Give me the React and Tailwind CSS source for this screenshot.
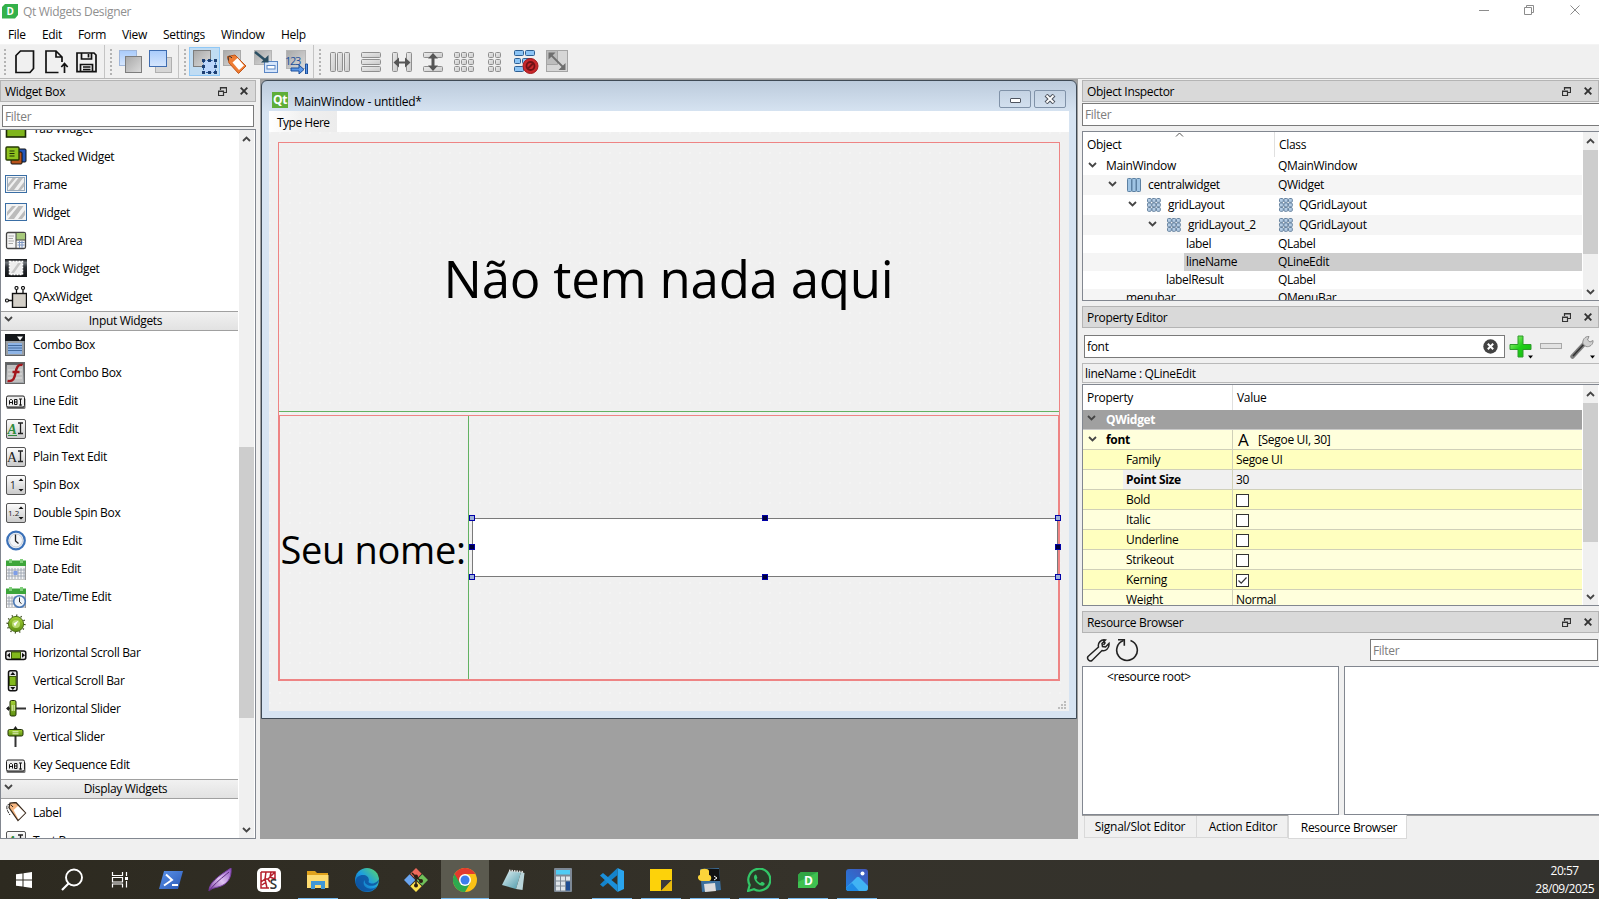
import React from "react";

/* ---------- shared bits ---------- */

const Chevron = ({ up, className = "" }) => (
  <svg width="9" height="6" viewBox="0 0 9 6" className={`shrink-0 ${className}`}>
    <path d={up ? "M1 5 4.5 1.5 8 5" : "M1 1 4.5 4.5 8 1"} fill="none" stroke="#454545" strokeWidth="1.8" />
  </svg>
);

const DockTitle = ({ children, className = "" }) => (
  <div className={`flex h-[22px] shrink-0 items-center border border-[#b4b4b4] bg-[#d9d9d9] pl-1 ${className}`}>
    <span className="grow pt-[2px]">{children}</span>
    <svg width="9" height="9" viewBox="0 0 9 9" className="mr-[13px]">
      <path d="M2.5 3V.5h6v5H6M2.5 1h6M.5 4h5v4.500h-5zM.5 4.400h5" fill="none" stroke="#333" strokeWidth="1.2" />
    </svg>
    <svg width="8" height="8" viewBox="0 0 8 8" className="mr-[6px]">
      <path d="M.7.7l6.600 6.600M7.300.7.7 7.300" stroke="#333" strokeWidth="1.900" />
    </svg>
  </div>
);

const VScroll = ({ before, thumb, className = "" }) => (
  <div className={`flex w-[15px] shrink-0 flex-col items-center bg-[#f0f0f0] ${className}`}>
    <div className="flex h-[17px] shrink-0 items-center"><Chevron up /></div>
    <div className={`w-full shrink-0 ${before}`} />
    <div className={`w-full shrink-0 bg-[#cdcdcd] ${thumb}`} />
    <div className="grow" />
    <div className="flex h-[17px] shrink-0 items-center"><Chevron /></div>
  </div>
);

/* ---------- tool bar icons ---------- */

const Ico = ({ children, w = 24, h = 24, vb, className = "" }) => (
  <svg width={w} height={h} viewBox={vb || `0 0 ${w} ${h}`} className={`shrink-0 ${className}`}>{children}</svg>
);

const Grads = () => (
  <svg width="0" height="0" className="absolute">
    <defs>
      <linearGradient id="gr" x1="0" y1="0" x2="1" y2="1"><stop offset="0" stopColor="#a8a8a8" /><stop offset="1" stopColor="#dcdcdc" /></linearGradient>
      <linearGradient id="bl" x1="0" y1="0" x2="0" y2="1"><stop offset="0" stopColor="#a9cbfb" /><stop offset="1" stopColor="#d6e6fd" /></linearGradient>
      <linearGradient id="barg" x1="0" y1="0" x2="1" y2="1"><stop offset="0" stopColor="#ececec" /><stop offset="1" stopColor="#c9c9c9" /></linearGradient>
      <linearGradient id="box" x1="0" y1="0" x2="0" y2="1"><stop offset="0" stopColor="#fdfdfd" /><stop offset="1" stopColor="#c9c9c9" /></linearGradient>
      <linearGradient id="grn" x1="0" y1="0" x2="0" y2="1"><stop offset="0" stopColor="#a5d236" /><stop offset="1" stopColor="#5d8f12" /></linearGradient>
      <linearGradient id="dk" x1="0" y1="0" x2="0" y2="1"><stop offset="0" stopColor="#5a5d60" /><stop offset="1" stopColor="#a5aaae" /></linearGradient>
      <linearGradient id="dk2" x1="0" y1="0" x2="0" y2="1"><stop offset="0" stopColor="#101214" /><stop offset=".2" stopColor="#6f7479" /><stop offset=".45" stopColor="#2b2f34" /><stop offset="1" stopColor="#101214" /></linearGradient>
      <linearGradient id="plus" x1="0" y1="0" x2="1" y2="1"><stop offset="0" stopColor="#b9f58e" /><stop offset=".5" stopColor="#1fd018" /><stop offset="1" stopColor="#18b412" /></linearGradient>
      <linearGradient id="edge" x1="0" y1="1" x2="1" y2="0"><stop offset="0" stopColor="#0c59a4" /><stop offset=".5" stopColor="#1b9de2" /><stop offset="1" stopColor="#5fdc63" /></linearGradient>
      <linearGradient id="photo" x1="0" y1="1" x2="1" y2="0"><stop offset="0" stopColor="#1f7fe0" /><stop offset="1" stopColor="#4455b8" /></linearGradient>
      <linearGradient id="fth" x1="0" y1="1" x2="1" y2="0"><stop offset="0" stopColor="#7c3fa0" /><stop offset=".5" stopColor="#e0c4f2" /><stop offset="1" stopColor="#8d4fc0" /></linearGradient>
      <linearGradient id="ps" x1="0" y1="0" x2="1" y2="1"><stop offset="0" stopColor="#5b93ea" /><stop offset="1" stopColor="#2a58b5" /></linearGradient>
      <linearGradient id="note" x1="0" y1="0" x2="1" y2="1"><stop offset="0" stopColor="#e4f3f5" /><stop offset="1" stopColor="#4a97a8" /></linearGradient>
    </defs>
  </svg>
);

const Grip = ({ className = "" }) => (
  <div className={`flex h-[26px] w-[2px] shrink-0 flex-col justify-between ${className}`}>
    {[0, 1, 2, 3, 4, 5, 6].map((i) => <div key={i} className="size-[2px] bg-[#b3b3b3]" />)}
  </div>
);
const Sep = ({ className = "" }) => <div className={`h-[33px] w-px shrink-0 bg-[#c4c4c4] ${className}`} />;

const Bar = ({ x, y, w, h }) => <rect x={x + 0.5} y={y + 0.5} width={w - 1} height={h - 1} rx="1" fill="url(#barg)" stroke="#8f8f8f" />;

const ToolBar = () => (
  <div className="flex h-[34px] shrink-0 items-center border-b border-[#b9b9b9] bg-[#f0f0f0]">
    <Grip className="ml-1" />
    <Ico className="ml-[9px]" h={26}><path d="M5.500 2h13v17.500l-3.500 4H1V6.500z" fill="none" stroke="#111" strokeWidth="1.700" /></Ico>
    <Ico className="ml-[6px]" h={26}><path d="M13.500 23.500H1V2h10l6 6v5M11 2v6h6M19.500 24v-9M16.300 18l3.200-3.400 3.200 3.400" fill="none" stroke="#111" strokeWidth="1.700" /></Ico>
    <Ico className="ml-[7px]" w={22} h={26}><path d="M1 4h17l2 2v16.700H1zM5.500 4v6h10V4M12.500 5v3.500M4.500 22.500v-7h12v7M7 18h7.500M7 20.500h7.500" fill="none" stroke="#111" strokeWidth="1.700" /></Ico>
    <Sep className="ml-[6px]" /><Grip className="ml-[5px]" />
    <Ico className="ml-[6px]"><rect x="1.500" y=".5" width="17" height="15" fill="url(#bl)" stroke="#9fb6da" /><rect x="7.500" y="6.500" width="16" height="16" fill="url(#gr)" stroke="#7d7d7d" /></Ico>
    <Ico className="ml-[6px]"><rect x="7.500" y="7.500" width="16" height="15" fill="#d6d6d6" stroke="#b0b0b0" /><rect x="1.500" y=".5" width="17" height="16" fill="url(#bl)" stroke="#3e6cb0" /></Ico>
    <Sep className="ml-[6px]" /><Grip className="ml-[5px]" />
    <div className="ml-[3px] flex h-[29px] w-[31px] items-center justify-center border border-[#90c8f6] bg-[#c0dcf3]">
      <Ico>
        <rect x=".5" y=".5" width="17" height="16" fill="url(#gr)" stroke="#7d7d7d" />
        <rect x="10.500" y="10.500" width="12" height="12" fill="#bcd6fb" stroke="#2a5fa5" strokeDasharray="2 1.500" />
        {[[9, 9], [15, 9], [21, 9], [9, 15], [21, 15], [9, 21], [15, 21], [21, 21]].map(([x, y]) => <rect key={`${x}-${y}`} x={x} y={y} width="3" height="3" fill="#1d3f73" />)}
      </Ico>
    </div>
    <Ico className="ml-[3px]"><rect x=".5" y=".5" width="17" height="15" fill="url(#gr)" stroke="#aaa" /><path d="M4.500 6.500 12 5l11 11-7.500 7.500L6 13z" fill="#ef7d34" stroke="#c0561a" /><path d="M9.500 12.500l5-4.500 6.500 7.500-5 4.500z" fill="#fff" /><path d="M5.500 10.500C4.500 6 6 5 9 8" fill="none" stroke="#333" /></Ico>
    <Ico className="ml-[7px]"><rect x=".5" y=".5" width="17" height="14" fill="url(#gr)" stroke="#b5b5b5" /><rect x="10.500" y="11.500" width="13" height="11" fill="#d5e5fb" stroke="#5b86c4" /><rect x="13" y="15.500" width="8" height="3.500" fill="#fff" stroke="#5b86c4" /><path d="M1 2l10 8" stroke="#2b4f63" strokeWidth="2.400" /><path d="M14.500 12.500V5l-7.500 7.500z" fill="#2b4f63" /></Ico>
    <Ico className="ml-[7px]"><rect x="1.500" y=".5" width="19" height="18" fill="url(#gr)" stroke="#b5b5b5" /><text x="0" y="15" fontSize="11" fontFamily="Open Sans, sans-serif" fill="#1d4f9a" textLength="16">123</text><path d="M6 18h8v-3l5 4.500-5 4.500v-3H6z" fill="#5b97e8" stroke="#1d4f9a" /><path d="M20.500 14v10h2V14z" fill="#5b97e8" stroke="#1d4f9a" /></Ico>
    <Sep className="ml-[4px]" /><Grip className="ml-[5px]" />
    <Ico className="ml-[8px]"><Bar x={1} y={2} w={6} h={20} /><Bar x={8} y={2} w={6} h={20} /><Bar x={15} y={2} w={6} h={20} /></Ico>
    <Ico className="ml-[7px]"><Bar x={1} y={2} w={20} h={6} /><Bar x={1} y={9} w={20} h={6} /><Bar x={1} y={16} w={20} h={6} /></Ico>
    <Ico className="ml-[7px]"><Bar x={1} y={2} w={6} h={20} /><Bar x={15} y={2} w={6} h={20} /><path d="M2.500 12.500l5.500-5v4h6v-4l5.500 5-5.500 5v-4H8v4z" fill="#555" /></Ico>
    <Ico className="ml-[7px]"><Bar x={1} y={2} w={20} h={6} /><Bar x={1} y={16} w={20} h={6} /><path d="M11 3l5 5.500h-3.500v7H16L11 21l-5-5.500h3.500v-7H6z" fill="#555" /></Ico>
    <Ico className="ml-[7px]">{[1, 8, 15].map((x) => [2, 9, 16].map((y) => <Bar key={`${x}${y}`} x={x} y={y} w={6} h={6} />))}</Ico>
    <Ico className="ml-[7px]">{[4, 11].map((x) => [2, 9, 16].map((y) => <Bar key={`${x}${y}`} x={x} y={y} w={6} h={6} />))}</Ico>
    <Ico className="ml-[6px]" w={26}>
      {[[0, 0, 9], [11, 0, 9], [0, 8, 6], [8, 8, 9], [0, 16, 9]].map(([x, y, w]) => <rect key={`${x}-${y}`} x={x + 0.5} y={y + 0.5} width={w} height="5" rx="1" fill="#8cc4f5" stroke="#2e5f92" />)}
      <circle cx="16.500" cy="16" r="7.500" fill="#c9282c" stroke="#a1191d" /><circle cx="16.500" cy="16" r="4" fill="none" stroke="#701216" strokeWidth="1.800" /><path d="M14 18.500l5-5" stroke="#701216" strokeWidth="2" />
    </Ico>
    <Ico className="ml-[5px]"><rect x="1.500" y=".5" width="21" height="21" fill="#d6d6d6" stroke="#a5a5a5" /><path d="M1.500.5h11v14h-11z" fill="#bdbdbd" stroke="#a5a5a5" /><path d="M5 4l14 14" stroke="#6f6f6f" strokeWidth="1.800" /><path d="M3.500 2.500h7l-7 7zM20.500 20h-7l7-7z" fill="#6f6f6f" /></Ico>
  </div>
);

/* ---------- widget box ---------- */

const ABI = (
  <><rect x="1.500" y="8" width="19" height="11" rx="1.500" fill="#777" /><rect x="1.500" y="6" width="18" height="11" rx="1.500" fill="#eee" stroke="#222" /><path d="M4.500 14.500v-4l1-1h1l1 1v4M4.500 12.500h3M9.500 9.500v5h2.500v-5zM9.500 12H12M14 9h3M15.500 9V15.500M14 15h3" fill="none" stroke="#111" /></>
);
const Sq = <rect x="1.500" y="1.500" width="19" height="19" rx="1.500" fill="url(#box)" stroke="#555" />;
const Cal = (
  <><rect x="1.500" y="6" width="19" height="16" fill="#f4f4f4" stroke="#9a9a9a" /><path d="M1 2.500h20V8H1z" fill="#3da53a" /><path d="M4 10v11M7 10v11M10 10v11M13 10v11M16 10v11M19 10v11M2 12h18M2 15h18M2 18h18" stroke="#9aa3b0" strokeWidth=".9" /><path d="M5.500 1v4M16.500 1v4" stroke="#7fcf7a" strokeWidth="3" /></>
);
const icons = {
  tab: <><rect x="1.500" y="5" width="19" height="14" fill="#7fb51c" stroke="#1c2a05" strokeWidth="1.600" /></>,
  stacked: <><rect x="11" y="3" width="10" height="13" rx="1" fill="#2556b8" stroke="#111" /><rect x="6" y="6" width="11" height="12" rx="1" fill="#b8521b" stroke="#111" /><rect x="1" y="1" width="13" height="13" rx="1" fill="#8fc31f" stroke="#263a05" strokeWidth="1.400" /><path d="M4.500 5h5M4.500 7.500h5M4.500 10h5" stroke="#1f2e05" /></>,
  frame: <><rect x=".5" y="1.500" width="21" height="17" fill="#f5f5f5" stroke="#3a6ea5" /><rect x="2.500" y="3.500" width="17" height="13" fill="#f1f1f1" stroke="#9ab" /><path d="M4 16 13.500 4h4.500L9 16zM13 16l6-8v4.500l-3 3.500zM3 10l4.500-6h3.500L3 13.500z" fill="#bcbcbc" /></>,
  widget: <><rect x=".5" y="1.500" width="21" height="17" fill="#f3f3f3" stroke="#3a6ea5" /><path d="M3 17 13.500 4h5L9 17zM13 17l7-9v5l-3 4zM2 10l5-6h4L2 14z" fill="#bcbcbc" /></>,
  mdi: <><rect x="1.500" y="2.500" width="19" height="16" rx="1.500" fill="#f5f5f5" stroke="#444" strokeWidth="1.300" /><path d="M11 3h9v7h-9z" fill="#a7c97b" /><path d="M11 3v15M11 10h9" stroke="#444" /><path d="M3.500 6H9M3.500 8.500H8M3.500 11H9M3.500 13.500H8" stroke="#aaa" /><path d="M12.500 12.500h7M12.500 15h7M14.500 11v7M17 11v7" stroke="#7c95c0" /></>,
  dock: <><rect x="0" y="1" width="22" height="18" fill="url(#dk2)" /><rect x="4.500" y="3.500" width="13" height="13" fill="#eee" stroke="#fff" strokeWidth="1.500" strokeDasharray="2 1" /><path d="M6 15l7-10h3L9 15z" fill="#c6c6c6" /></>,
  qax: <><rect x="7.500" y="7.500" width="14" height="14" fill="#d4d0c8" stroke="#111" strokeWidth="1.400" /><path d="M11.500 7V3.500M18 7V3.500M7 14.500H4" stroke="#111" strokeWidth="1.300" /><g fill="#fff" stroke="#111" strokeWidth="1.200"><circle cx="11.500" cy="2" r="1.500" /><circle cx="18" cy="2" r="1.500" /><circle cx="2" cy="14.500" r="1.500" /></g></>,
  combo: <><rect x=".5" y=".5" width="19" height="21" fill="#9a9fa4" stroke="#5e6368" /><path d="M0 0h20v7H0z" fill="#15181b" /><path d="M12 2.500h6l-3 4z" fill="#fff" /><rect x="3" y="9" width="14" height="11" fill="#8eb4e6" /><path d="M3 11.500h14M3 14h14M3 16.500h14" stroke="#426a9e" /></>,
  fontcombo: <><rect x=".5" y=".5" width="19" height="21" fill="url(#dk)" stroke="#666" /><rect x="2" y="3" width="16" height="17" fill="#bfbfbf" /><path d="M3 8h14M3 12h14M3 16h14" stroke="#dedede" /><path d="M17.500 3c-5-1-6 3-7 8s-2 9-8 8M7.500 10h7" fill="none" stroke="#a3161c" strokeWidth="2.400" /></>,
  line: ABI,
  key: ABI,
  text: <>{Sq}<text x="2.500" y="16" fontFamily="Liberation Serif, serif" fontStyle="italic" fontWeight="bold" fontSize="14" fill="#2d8a3c">A</text><path d="M3 17.500h9" stroke="#2d8a3c" /><path d="M13 5h5M13 15.500h5M15.500 5v10.500" stroke="#222" strokeWidth="1.300" /></>,
  plain: <>{Sq}<text x="2" y="16" fontFamily="Liberation Serif, serif" fontSize="14" fill="#222">A</text><path d="M13 5h5M13 15.500h5M15.500 5v10.500" stroke="#222" strokeWidth="1.300" /></>,
  spin: <>{Sq}<text x="5" y="14.500" fontFamily="Open Sans, sans-serif" fontSize="10" fill="#222">1</text><path d="M13.500 7l2.500-2.500L18.500 7zM13.500 15l2.500 2.500 2.500-2.500z" fill="#111" /></>,
  dspin: <>{Sq}<text x="3" y="14" fontFamily="Open Sans, sans-serif" fontSize="8" fill="#222" textLength="11">1.2</text><path d="M13.500 7l2.500-2.500L18.500 7zM13.500 15l2.500 2.500 2.500-2.500z" fill="#111" /></>,
  time: <><circle cx="11" cy="10.500" r="8.800" fill="#f3f5f8" stroke="#3b71b8" strokeWidth="2.200" /><circle cx="11" cy="10.500" r="6.500" fill="none" stroke="#c6ccd4" /><path d="M10.500 4.500v6.500l3 2.500" fill="none" stroke="#222" strokeWidth="1.300" /></>,
  date: <>{Cal}<rect x="8.500" y="13" width="4" height="4" fill="#7e9ee8" /></>,
  datetime: <>{Cal}<circle cx="14.500" cy="15.500" r="5.800" fill="#eef3f9" stroke="#4a78b5" strokeWidth="1.600" /><path d="M14.500 11.500v4.500l2 1.500" fill="none" stroke="#222" /></>,
  dial: <><circle cx="11" cy="10" r="8.800" fill="none" stroke="#3b4a1e" strokeWidth="1.600" strokeDasharray="1.200 3.400" /><circle cx="11" cy="10" r="7.600" fill="url(#grn)" stroke="#4c6f16" /><circle cx="11" cy="10" r="4" fill="#b6d96c" /><path d="M10 12.500 8.500 9.500l5-3z" fill="#fff" /></>,
  hsb: <><rect x=".8" y="9" width="20" height="8.500" rx="2" fill="#e8e8e8" stroke="#111" strokeWidth="1.500" /><rect x="6.500" y="10" width="9" height="6.500" fill="#82b81c" stroke="#3a5606" /><path d="M2 13.300l3-2.500v5zM20 13.300l-3-2.500v5z" fill="#111" /></>,
  vsb: <><rect x="3.500" y=".8" width="8.500" height="20" rx="2" fill="#e8e8e8" stroke="#111" strokeWidth="1.500" /><rect x="4.500" y="6.500" width="6.500" height="9" fill="#82b81c" stroke="#3a5606" /><path d="M7.800 2 5.300 5h5zM7.800 20l-2.500-3h5z" fill="#111" /></>,
  hs: <><path d="M2 10.500h19" stroke="#333" strokeWidth="2" /><path d="M1 10.500l3-2.500v5z" fill="#222" /><rect x="5" y="2.500" width="6" height="15.500" rx="1.500" fill="url(#grn)" stroke="#1f2e05" /><path d="M7.200 7v6M9.200 7v6" stroke="#e6f3c6" /></>,
  vs: <><path d="M10.500 2v19" stroke="#333" strokeWidth="2" /><path d="M10.500 0l2.500 3.500H8z" fill="#222" /><rect x="3" y="3.500" width="15" height="6.500" rx="1.500" fill="url(#grn)" stroke="#1f2e05" /><path d="M7.500 5.800h6M7.500 7.800h6" stroke="#e6f3c6" /></>,
  label: <><path d="M4 5.500 5 1l6-.5L20.500 11l-7.500 7.500z" fill="#f5b681" stroke="#3a2c20" strokeWidth="1.300" /><path d="M8.500 8 13 4l7 7-6.500 6.500z" fill="#fff" /><path d="M8 5C4-.5-2 3 5 13" fill="none" stroke="#222" strokeDasharray="3 1" /></>,
};

const Item = ({ icon, children }) => (
  <div className="flex h-7 shrink-0 items-center pl-1">
    <Ico w={22} h={22}>{icons[icon]}</Ico>
    <span className="ml-[6px]">{children}</span>
  </div>
);
const Cat = ({ children }) => (
  <div className="flex h-5 shrink-0 items-center border-y border-[#a0a0a0] bg-gradient-to-b from-[#f1f1f1] to-[#e2e2e2]">
    <Chevron className="mb-1 ml-[3px]" />
    <span className="grow text-center">{children}</span>
  </div>
);

const WidgetBox = () => (
  <div className="flex w-[256px] shrink-0 flex-col">
    <DockTitle className="mt-px pr-px">Widget Box</DockTitle>
    <div className="mx-[2px] mt-[3px] flex h-[22px] shrink-0 items-center border border-[#7a7a7a] bg-white pt-px pl-[2px] text-[#7d7d7d]">Filter</div>
    <div className="mt-[2px] flex h-[710px] shrink-0 border border-[#828790] bg-white">
      <div className="flex h-[708px] w-[237px] flex-col overflow-hidden">
        <div className="-mt-[15px] flex flex-col">
          <Item icon="tab">Tab Widget</Item>
          <Item icon="stacked">Stacked Widget</Item>
          <Item icon="frame">Frame</Item>
          <Item icon="widget">Widget</Item>
          <Item icon="mdi">MDI Area</Item>
          <Item icon="dock">Dock Widget</Item>
          <Item icon="qax">QAxWidget</Item>
          <Cat>Input Widgets</Cat>
          <Item icon="combo">Combo Box</Item>
          <Item icon="fontcombo">Font Combo Box</Item>
          <Item icon="line">Line Edit</Item>
          <Item icon="text">Text Edit</Item>
          <Item icon="plain">Plain Text Edit</Item>
          <Item icon="spin">Spin Box</Item>
          <Item icon="dspin">Double Spin Box</Item>
          <Item icon="time">Time Edit</Item>
          <Item icon="date">Date Edit</Item>
          <Item icon="datetime">Date/Time Edit</Item>
          <Item icon="dial">Dial</Item>
          <Item icon="hsb">Horizontal Scroll Bar</Item>
          <Item icon="vsb">Vertical Scroll Bar</Item>
          <Item icon="hs">Horizontal Slider</Item>
          <Item icon="vs">Vertical Slider</Item>
          <Item icon="key">Key Sequence Edit</Item>
          <Cat>Display Widgets</Cat>
          <Item icon="label">Label</Item>
          <Item icon="text">Text Browser</Item>
        </div>
      </div>
      <VScroll className="ml-px" before="h-[300px]" thumb="h-[271px]" />
    </div>
  </div>
);

/* ---------- form being designed ---------- */

const Handle = ({ className, dim }) => (
  <div className={`absolute size-[6px] border border-[#0000a8] ${dim ? "bg-[#9db0d8]" : "bg-[#00003c]"} ${className}`} />
);

const Form = () => (
  <div className="mr-1 ml-1 flex w-[818px] shrink-0 flex-col bg-[#a0a0a0] pt-px">
    <div className="ml-[1px] flex h-[639px] w-[816px] flex-col rounded-t-[6px] border border-[#3f4a55] bg-[#d7e4f2] bg-gradient-to-b from-[#bccbdc] via-[#d7e4f2] via-5% to-[#d7e4f2] px-[7px] pb-[7px]">
      <div className="flex h-[30px] shrink-0 items-center pt-[8px]">
        <div className="ml-[3px] flex size-[16px] items-center justify-center bg-[#5fae38] text-[12px] leading-none font-bold tracking-[-.5px] text-white">Qt</div>
        <span className="ml-[6px] grow pt-[4px] tracking-[-.26px]">MainWindow - untitled*</span>
        <div className="-mt-[3px] mr-[3px] flex h-[18px] w-[32px] items-center justify-center rounded-[2px] border border-[#8092a8]">
          <div className="mt-[3px] h-[5px] w-[11px] rounded-[1px] border border-[#4f5560] bg-white" />
        </div>
        <div className="-mt-[3px] mr-[3px] flex h-[18px] w-[32px] items-center justify-center rounded-[2px] border border-[#8092a8]">
          <svg width="12" height="10" viewBox="0 0 12 10"><path d="M2 1l8 8M10 1 2 9" stroke="#4f5560" strokeWidth="4" /><path d="M2.500 1.500l7 7M9.500 1.500l-7 7" stroke="#fff" strokeWidth="1.800" /></svg>
        </div>
      </div>
      <div className="flex h-[21px] shrink-0 bg-white">
        <div className="flex w-[68px] items-center bg-gradient-to-r from-white via-[#f0f0f0] to-[#ececec] pt-[2px] pl-[8px] tracking-[-.5px]">Type Here</div>
      </div>
      <div className="flex grow flex-col bg-[#f0f0f0] bg-[radial-gradient(circle_at_1px_1px,#f7f7f7_0.600px,transparent_0.800px)] bg-[size:10px_10px] px-[9px] pt-[10px]">
        <div className="flex h-[539px] shrink-0 flex-col border border-[#ee8484]">
          <div className="flex h-[269px] shrink-0 items-center justify-center border-b border-b-[#62b262] pt-[2px] pr-px text-[51px] text-black">
            <span className="whitespace-nowrap tracking-[-.25px]">Não tem nada aqui</span>
          </div>
          <div className="mt-[3px] flex grow border border-[#ee8484]">
            <div className="flex w-[189px] shrink-0 items-center justify-center border-r border-r-[#62b262] pt-[2px] pr-[2px] text-[38px] text-black">
              <span className="whitespace-nowrap">Seu nome:</span>
            </div>
            <div className="flex grow items-center pl-[3px]">
              <div className="relative -mt-px h-[59px] grow border border-[#7a7a7a] bg-white">
                <Handle dim className="-top-[4px] -left-[4px]" />
                <Handle className="-top-[4px] left-[289px]" />
                <Handle dim className="-top-[4px] -right-[4px]" />
                <Handle className="top-[25px] -left-[4px]" />
                <Handle className="top-[25px] -right-[4px]" />
                <Handle dim className="-bottom-[4px] -left-[4px]" />
                <Handle className="-bottom-[4px] left-[289px]" />
                <Handle dim className="-right-[4px] -bottom-[4px]" />
              </div>
            </div>
          </div>
        </div>
        <div className="flex grow items-end justify-end pb-px">
          <svg width="10" height="10" className="-mr-[6px]"><path d="M8 1h2v2H8zM8 4h2v2H8zM5 4h2v2H5zM8 7h2v2H8zM5 7h2v2H5zM2 7h2v2H2z" fill="#bdbdbd" /></svg>
        </div>
      </div>
    </div>
  </div>
);

/* ---------- right docks ---------- */

const Cols = () => (
  <svg width="14" height="14" viewBox="0 0 14 14" className="shrink-0">{[0.5, 5, 9.5].map((x) => <rect key={x} x={x} y=".5" width="4" height="13" rx=".8" fill="#9fc4e4" stroke="#5c80a2" />)}</svg>
);
const Grid9 = () => (
  <svg width="14" height="14" viewBox="0 0 14 14" className="shrink-0">{[0.5, 5, 9.5].map((x) => [0.5, 5, 9.5].map((y) => <rect key={`${x}${y}`} x={x} y={y} width="3.800" height="3.800" rx="1" fill="#b4cce4" stroke="#66829f" />))}</svg>
);

const TreeRow = ({ pad, gap = "ml-[9px]", open, icon, name, cls, cicon, h = "h-[18px]", alt, sel }) => (
  <div className={`flex shrink-0 items-center ${h} ${alt ? "bg-[#f5f5f5]" : "bg-white"}`}>
    <div className={`shrink-0 ${pad}`} />
    <div className={`flex h-full grow items-center ${sel ? "bg-[#cdcdcd]" : ""}`}>
      {open && <Chevron className="mb-[2px]" />}
      {icon && <div className="ml-[10px]">{icon}</div>}
      <span className={open ? (icon ? "ml-[7px]" : "ml-[9px]") : gap}>{name}</span>
    </div>
    <div className={`flex h-full w-[307px] shrink-0 items-center pl-[3px] ${sel ? "bg-[#cdcdcd]" : ""}`}>
      {cicon && <div className="mr-[6px] ml-px"><Grid9 /></div>}
      {cls}
    </div>
  </div>
);

const ObjectInspector = () => (
  <>
    <DockTitle className="mt-px">Object Inspector</DockTitle>
    <div className="mt-px flex h-[23px] shrink-0 items-center border border-r-0 border-[#7a7a7a] bg-white pl-[2px] text-[#7d7d7d]">Filter</div>
    <div className="mt-[5px] flex h-[170px] shrink-0 overflow-hidden border border-r-0 border-[#828790] bg-white">
      <div className="flex w-[499px] shrink-0 flex-col">
        <div className="flex h-[25px] shrink-0">
          <div className="flex w-[192px] flex-col border-r border-[#e0e0e0]">
            <svg width="9" height="5" viewBox="0 0 9 5" className="mt-0 ml-[92px] shrink-0"><path d="M1 4.500 4.500 1 8 4.500" fill="none" stroke="#555" /></svg>
            <span className="-mt-[1px] pl-[4px] leading-[18px]">Object</span>
          </div>
          <span className="pt-[4px] pl-[4px] leading-[18px]">Class</span>
        </div>
        <TreeRow pad="w-[5px]" open name="MainWindow" cls="QMainWindow" />
        <TreeRow pad="w-[25px]" open icon={<Cols />} name="centralwidget" cls="QWidget" h="h-5" alt />
        <TreeRow pad="w-[45px]" open icon={<Grid9 />} name="gridLayout" cls="QGridLayout" cicon h="h-5" />
        <TreeRow pad="w-[65px]" open icon={<Grid9 />} name="gridLayout_2" cls="QGridLayout" cicon h="h-5" alt />
        <TreeRow pad="w-[101px]" gap="ml-[2px]" name="label" cls="QLabel" />
        <TreeRow pad="w-[101px]" gap="ml-[2px]" name="lineName" cls="QLineEdit" alt sel />
        <TreeRow pad="w-[81px]" gap="ml-[2px]" name="labelResult" cls="QLabel" />
        <TreeRow pad="w-[41px]" gap="ml-[2px]" name="menubar" cls="QMenuBar" alt />
      </div>
      <VScroll className="ml-px" before="h-px" thumb="h-[104px]" />
    </div>
  </>
);

const Check = ({ on }) => (
  <div className="flex size-[13px] items-center justify-center border border-[#333] bg-white">
    {on && <svg width="11" height="11" viewBox="0 0 11 11"><path d="M1.500 5.500 4.200 8.200 9.500 2.500" fill="none" stroke="#333" strokeWidth="1.200" /></svg>}
  </div>
);

const PropRow = ({ name, value, tone }) => (
  <div className={`flex h-5 shrink-0 ${tone}`}>
    <div className="flex w-[150px] shrink-0 items-center border-r border-b border-[#d0d0b8] pt-px">
      <span className="ml-[43px]">{name}</span>
    </div>
    <div className="flex grow items-center border-b border-[#d0d0b8] pt-px pl-[3px]">{value}</div>
  </div>
);

const PropertyEditor = () => (
  <>
    <DockTitle className="mt-[5px]">Property Editor</DockTitle>
    <div className="mt-[7px] flex h-[23px] shrink-0 items-center pl-[2px]">
      <div className="flex h-[23px] w-[421px] shrink-0 items-center border border-[#7a7a7a] bg-white pl-[2px]">
        <span className="grow">font</span>
        <svg width="15" height="15" viewBox="0 0 15 15" className="mr-[6px]"><circle cx="7.500" cy="7.500" r="7.200" fill="#424242" /><path d="M4.800 4.800l5.400 5.400M10.200 4.800l-5.400 5.400" stroke="#fff" strokeWidth="2" /></svg>
      </div>
      <Ico w={26} h={24} className="ml-[4px]"><path d="M9 1h5v8.500h8v5h-8V22H9v-7.500H1v-5h8z" fill="url(#plus)" stroke="#2f9a2c" /><path d="M19 20.500h5l-2.500 3z" fill="#000" /></Ico>
      <Ico w={24} h={24} className="ml-[4px]"><rect x="1.500" y="8.500" width="21" height="5" fill="#e2e2e2" stroke="#a8a8a8" /></Ico>
      <Ico w={26} h={24} className="ml-[7px]"><path d="M2.500 21.500 15 8" stroke="#7f7f7f" strokeWidth="4.500" strokeLinecap="round" /><path d="M3 21 14.500 8.500" stroke="#333" strokeWidth="1.500" /><path d="M13 9c-1-4 2-8 6-7.500L17.500 5l2.500 2 3-1.500c.5 4-3.500 7-7 6z" fill="#d0d0d0" stroke="#8f8f8f" /><path d="M20 20.500h5l-2.500 3z" fill="#000" /></Ico>
    </div>
    <div className="mt-[5px] flex h-[20px] shrink-0 items-center border border-r-0 border-[#b9b9b9] pt-px pl-[2px]">lineName : QLineEdit</div>
    <div className="mt-px flex h-[222px] shrink-0 overflow-hidden border border-r-0 border-[#828790] bg-white">
      <div className="flex w-[499px] shrink-0 flex-col">
        <div className="flex h-[25px] shrink-0 items-center">
          <div className="flex h-full w-[150px] items-center border-r border-[#e0e0e0] pl-[4px]">Property</div>
          <span className="pl-[4px]">Value</span>
        </div>
        <div className="flex h-5 shrink-0 items-center border-b border-[#c9c9c9] bg-[#a0a0a0] pt-px pl-[4px] font-bold text-white">
          <Chevron className="mb-[5px]" /><span className="ml-[10px]">QWidget</span>
        </div>
        <div className="flex h-5 shrink-0 bg-[#ffffdc]">
          <div className="flex w-[150px] shrink-0 items-center border-r border-b border-[#d0d0b8] pt-px pl-[5px] font-bold"><Chevron className="mb-[3px]" /><span className="ml-[9px]">font</span></div>
          <div className="flex grow items-center border-b border-[#d0d0b8] pt-px pl-[5px]"><span className="-mt-px w-[20px] text-[17px] leading-none">A</span>[Segoe UI, 30]</div>
        </div>
        <PropRow name="Family" value="Segoe UI" tone="bg-[#ffffbf]" />
        <div className="flex h-5 shrink-0 bg-[#f0f0f0]">
          <div className="w-10 shrink-0 border-b border-[#d0d0b8] bg-[#ffffdc]" />
          <div className="flex w-[110px] shrink-0 items-center border-r border-b border-[#d0d0b8] pt-px pl-[3px] font-bold">Point Size</div>
          <div className="flex grow items-center border-b border-[#d0d0b8] pt-px pl-[3px]">30</div>
        </div>
        <PropRow name="Bold" value={<Check />} tone="bg-[#ffffbf]" />
        <PropRow name="Italic" value={<Check />} tone="bg-[#ffffdc]" />
        <PropRow name="Underline" value={<Check />} tone="bg-[#ffffbf]" />
        <PropRow name="Strikeout" value={<Check />} tone="bg-[#ffffdc]" />
        <PropRow name="Kerning" value={<Check on />} tone="bg-[#ffffbf]" />
        <PropRow name="Weight" value="Normal" tone="bg-[#ffffdc]" />
      </div>
      <VScroll className="ml-px" before="h-px" thumb="h-[139px]" />
    </div>
  </>
);

const ResourceBrowser = () => (
  <>
    <DockTitle className="mt-[5px]">Resource Browser</DockTitle>
    <div className="mt-[6px] flex h-[22px] shrink-0 items-center pl-[4px]">
      <Ico w={24} h={24}><path d="M2 18.500 12.500 9C11.500 5 15 1 19.500 2L16 5.500l.5 3 3 .5L23 5.500c.5 5-3.500 8-7 7L6 22.500C3.500 24 .5 21 2 18.500zM17.500 2.500 19 5l-1.500 2" fill="none" stroke="#222" strokeWidth="1.500" /></Ico>
      <Ico w={24} h={24} className="ml-[5px]"><path d="M8.500 2.500a10.300 10.300 0 1 0 7 0" fill="none" stroke="#222" strokeWidth="1.600" /><path d="M3 1.800h6.300v6" fill="none" stroke="#222" strokeWidth="1.600" /></Ico>
      <div className="mr-px ml-auto flex h-[22px] w-[228px] items-center border border-[#7a7a7a] bg-white pt-px pl-[2px] text-[#7d7d7d]">Filter</div>
    </div>
    <div className="mt-[5px] flex h-[149px] shrink-0">
      <div className="w-[257px] border border-[#828790] bg-white pt-[2px] pl-[24px] tracking-[-.4px]">&lt;resource root&gt;</div>
      <div className="ml-[5px] grow border border-r-0 border-[#828790] bg-white" />
    </div>
    <div className="flex h-[24px] shrink-0 items-start border-t border-[#a0a0a0] pl-[2px]">
      <div className="flex h-[22px] w-[113px] items-center justify-center border border-t-0 border-[#d9d9d9] pr-px tracking-[-.26px]">Signal/Slot Editor</div>
      <div className="flex h-[22px] w-[91px] items-center justify-center border border-t-0 border-l-0 border-[#d9d9d9] pl-[2px] tracking-[-.26px]">Action Editor</div>
      <div className="-mt-px flex h-[24px] w-[119px] items-center justify-center border border-t-0 border-[#d9d9d9] bg-white pt-[2px] pl-[3px]">Resource Browser</div>
    </div>
  </>
);

/* ---------- task bar ---------- */

const TaskButton = ({ children, run, active }) => (
  <div className={`mr-px flex h-full w-12 shrink-0 flex-col items-center ${active ? "bg-[#5b5a4f]" : ""}`}>
    <div className="flex grow items-center pt-[2px]"><Ico>{children}</Ico></div>
    <div className={`h-px ${active ? "w-12" : "w-10"} ${run ? "bg-[#76b9ed]" : ""}`} />
  </div>
);

const TaskBar = () => (
  <div className="flex h-[39px] shrink-0 bg-gradient-to-r from-[#2d2a20] via-[#35322a] to-[#33322e] text-white">
    <TaskButton><path d="M4 6.300l6.500-.9v6.100H4zM11.500 5.200 20 4v7.500h-8.500zM4 12.500h6.500v6.100L4 17.700zM11.500 12.500H20V20l-8.500-1.200z" fill="#fff" /></TaskButton>
    <TaskButton><g transform="translate(-1 0)"><circle cx="14" cy="9.500" r="8" fill="none" stroke="#fff" strokeWidth="1.900" /><path d="M8.500 15.500 2 22" stroke="#fff" strokeWidth="2.200" /></g></TaskButton>
    <TaskButton><g transform="translate(-2 0)"><path d="M4.500 4v3.500h10V4M4.500 19.500V16h10v3.500M4.500 9.500h10v4.500h-10zM18.500 4v4M18.500 13v6.500" fill="none" stroke="#fff" strokeWidth="1.200" /><path d="M17 9h3v3h-3z" fill="#fff" /></g></TaskButton>
    <TaskButton><path d="M5 3h19l-5 18H0z" fill="url(#ps)" /><path d="M7 6.500l6 5.500-8 5.500M13 17h6" fill="none" stroke="#fff" strokeWidth="2" /></TaskButton>
    <TaskButton><path d="M1 23c0-8 8-14 22-23 1 10-4 17-13 19-4 1-6 1-9 4z" fill="url(#fth)" stroke="#7a3fa5" /><path d="M1 23C8 14 14 10 21 4" fill="none" stroke="#5c2a80" /></TaskButton>
    <TaskButton><rect width="24" height="24" rx="5" fill="#fff" /><path d="M4 4h14v8M4 4v16h8M9 4l-1 7-4 3M18 4l-7 7 2 3M8 11h4M8 11l2 9M14 4l-1 5 5 2M5 17l4-3" fill="none" stroke="#b51f2c" strokeWidth="1.500" /><text x="12.500" y="20.500" fontFamily="Open Sans, sans-serif" fontWeight="600" fontSize="14" fill="#333">S</text></TaskButton>
    <TaskButton run><path d="M1 3h8l2 2h11v15H1z" fill="#e0a21c" /><path d="M1 7h21.500v13H1z" fill="#fddb70" /><path d="M5 13h14v8h-4v-4H9v4H5z" fill="#3f97d8" /></TaskButton>
    <TaskButton><circle cx="12" cy="12" r="12" fill="url(#edge)" /><path d="M9.500 12c-3 5 2 9.500 8 8.500 2-.3 3.500-1.200 4.500-2.500-4 8-20 7.500-21.500-4C1 9 4 7 8 7c4 0 7 3 5.500 7 1 1.500 4 2 6 1 3-1.500 4.500-3 4.500-4 .2 6-8 9-13 5-1-1-1.500-2.500-1.500-4z" fill="#0c4f9e" opacity=".8" /></TaskButton>
    <TaskButton><g transform="rotate(45 12 12)"><rect x="3.500" y="3.500" width="8" height="8" fill="#ee6a5c" /><rect x="12.500" y="3.500" width="8" height="8" fill="#6fc05a" /><rect x="3.500" y="12.500" width="8" height="8" fill="#6aa5f0" /><rect x="12.500" y="12.500" width="8" height="8" fill="#fbe14e" /></g><path d="M8 5l4 4v8M12 9l5 4" fill="none" stroke="#2b1d12" strokeWidth="1.500" /><g fill="#2b1d12"><circle cx="12" cy="8.500" r="2" /><circle cx="17" cy="13" r="2" /><circle cx="12" cy="17.500" r="2" /></g></TaskButton>
    <TaskButton run active><circle cx="12" cy="12" r="12" fill="#fbc116" /><path d="M1.600 6A12 12 0 0 0 12 24l5.200-9z" fill="#2da94f" /><path d="M12 6h10.400A12 12 0 0 0 1.600 6l5.200 9z" fill="#e33b2e" /><circle cx="12" cy="12" r="6" fill="#fff" /><circle cx="12" cy="12" r="4.500" fill="#3d7ded" /></TaskButton>
    <TaskButton><path d="M7 3l12 1-5 17L0 17z" fill="url(#note)" /><path d="M19 4l3.500 1L20.500 22l-6.500-1z" fill="#b9d5da" /><path d="M7 2.500l14 1.500" stroke="#ddd" strokeWidth="2" strokeDasharray="1.500 1" /></TaskButton>
    <TaskButton><rect x="3" y="0" width="18" height="24" rx="1" fill="#7d8895" /><rect x="5" y="2" width="14" height="4.500" fill="#4fcbf4" /><g fill="#dfe5ea"><path d="M5 8.500h4v4H5zM10 8.500h4v4h-4zM15 8.500h4v4h-4zM5 13.500h4v4H5zM10 13.500h4v4h-4zM5 18.500h4v4H5zM10 18.500h4v4h-4z" /></g><path d="M15 13.500h4v9h-4z" fill="#1f4e93" /></TaskButton>
    <TaskButton run><path d="M17.500 0 24 3v18l-6.500 3z" fill="#2aa5ee" /><path d="M17.500 0v7L3 19l-3-2.500z" fill="#1483cb" /><path d="M17.500 24v-7L3 5 0 7.500z" fill="#1b8fd9" /></TaskButton>
    <TaskButton run><path d="M1 1h22v22H1z" fill="#fdd20a" /><path d="M12 12h11L12 23z" fill="#3b3a3a" /><path d="M23 12v11H12z" fill="#e8b90c" /></TaskButton>
    <TaskButton run><path d="M2 1l19-1 2 22-19 2z" fill="#3a6e9c" /><path d="M8 1h13l1 12H9z" fill="#111" /><path d="M2 3c0-3 9-3 9 0v4c3 0 3 6 0 6H4c-5 0-5-6-2-6z" fill="#fbd43a" /><path d="M6 16l11-1 1 8-11 1z" fill="#dcdcdc" /><path d="M16 8l3 2-3 2" fill="none" stroke="#fff" /></TaskButton>
    <TaskButton run><path d="M1 23l1.700-6A11 11 0 1 1 7 21.300z" fill="#2b3a28" stroke="#32c667" strokeWidth="2.200" /><path d="M8.500 6.500c-3 2-1 6 1.500 8.500s6 4 7.500 1.500c.6-1.300-.3-1.800-2.500-2.800-1 .3-1 1.500-2 1.200-1.800-.8-3-2.200-3.500-3.500 0-.7 1-1 .8-2-.7-2-1-3-1.800-2.900z" fill="#32c667" /></TaskButton>
    <TaskButton run><path d="M5 4h17v12l-3 4H2V7z" fill="#3fc151" /><path d="M5 4h17L2 14V7z" fill="#31a544" /><text x="8" y="16.500" fontFamily="Open Sans, sans-serif" fontWeight="bold" fontSize="12" fill="#fff">D</text></TaskButton>
    <TaskButton run><rect x="1" y="1" width="22" height="22" rx="3" fill="url(#photo)" /><path d="M1 20 11.500 9.500c1-1 2-1 3 0l8.500 8.500v2c0 2-1 3-3 3H4c-2 0-3-1-3-3z" fill="#41b3f4" /><path d="M14 23 7 15l-6 5c0 2 1 3 3 3z" fill="#1f8ae6" /><circle cx="17.500" cy="5.500" r="2" fill="#fff" /></TaskButton>
    <div className="mr-[5px] ml-auto flex flex-col items-center justify-center pt-[1px] leading-[18px] tracking-[-.5px]">
      <span>20:57</span>
      <span>28/09/2025</span>
    </div>
  </div>
);

/* ---------- application ---------- */

export default function App() {
  return (
    <div className="flex h-[899px] w-[1599px] flex-col overflow-hidden bg-[#f0f0f0] font-['Open_Sans','Noto_Sans',sans-serif] text-[12px] leading-[16px] tracking-[-.32px] whitespace-nowrap text-black">
      <Grads />
      <div className="flex h-[23px] shrink-0 items-center bg-white">
        <svg width="17" height="15" viewBox="0 0 17 15" className="ml-[2px]"><path d="M3 0h13v11l-3 3.500H0V3z" fill="#34b14a" /><text x="4.500" y="11" fontFamily="Open Sans, sans-serif" fontWeight="bold" fontSize="10" fill="#fff">D</text></svg>
        <span className="ml-[4px] grow pt-px text-[#8f8f8f]">Qt Widgets Designer</span>
        <svg width="110" height="12" viewBox="0 0 110 12" className="-mt-[3px] mr-[19px]"><path d="M9 6.500h10M54.500 3.500h7v7h-7zM56.500 3.500v-2h7v7h-2M100.500 1.500l9 9M109.500 1.500l-9 9" fill="none" stroke="#8c8c8c" /></svg>
      </div>
      <div className="flex h-[21px] shrink-0 items-center bg-white pt-[2px]">
        <span className="ml-[8px] w-[34px]">File</span>
        <span className="w-[36px]">Edit</span>
        <span className="w-[44px]">Form</span>
        <span className="w-[41px]">View</span>
        <span className="w-[58px]">Settings</span>
        <span className="w-[60px]">Window</span>
        <span>Help</span>
      </div>
      <div className="h-px shrink-0 bg-[#f4f4f4]" />
      <ToolBar />
      <div className="flex h-[760px] shrink-0">
        <WidgetBox />
        <Form />
        <div className="flex w-[517px] shrink-0 flex-col">
          <ObjectInspector />
          <PropertyEditor />
          <ResourceBrowser />
        </div>
      </div>
      <div className="grow" />
      <TaskBar />
    </div>
  );
}
